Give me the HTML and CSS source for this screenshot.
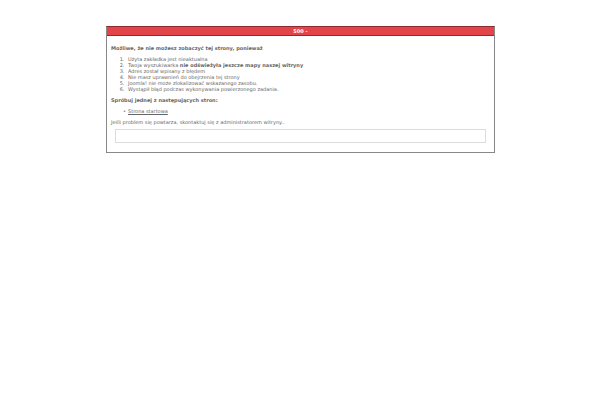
FILE: index.html
```html
<!DOCTYPE html>
<html lang="pl">
<head>
<meta charset="utf-8">
<title>500</title>
<link rel="stylesheet" href="styles.css">
</head>
<body>
<main class="error-box">
<h1 class="error-head">500 -</h1>
<div class="error-body">
<p><strong>Możliwe, że nie możesz zobaczyć tej strony, ponieważ</strong></p>
<ol>
<li>Użyta zakładka jest nieaktualna</li>
<li>Twoja wyszukiwarka <strong>nie odświeżyła jeszcze mapy naszej witryny</strong></li>
<li>Adres został wpisany z błędem</li>
<li>Nie masz uprawnień do obejrzenia tej strony</li>
<li>Joomla! nie może zlokalizować wskazanego zasobu.</li>
<li>Wystąpił błąd podczas wykonywania powierzonego zadania.</li>
</ol>
<p><strong>Spróbuj jednej z następujących stron:</strong></p>
<ul>
<li><a href="#">Strona startowa</a></li>
</ul>
<p>Jeśli problem się powtarza, skontaktuj się z administratorem witryny..</p>
<div class="tech-info"></div>
</div>
</main>
</body>
</html>
```
FILE: styles.css
```css
body {
  margin: 0;
  padding: 26px 105px 0 106px;
  background: #fff;
  color: #666;
  font: 5px/6px "DejaVu Sans", sans-serif;
}

.error-box {
  border: 1px solid #888;
  border-top-color: #8a2c30;
}

.error-head {
  margin: 0;
  padding: 1px 0;
  border-bottom: 1px solid #8a2c30;
  background: #e24449;
  color: #fff;
  font-size: 5px;
  line-height: 6px;
  text-align: center;
}

.error-body {
  padding: 9px 4px 5px;
}

p {
  margin: 0;
}

ol,
ul {
  margin: 5px 0;
  padding-left: 15px;
}

ul {
  list-style-type: "•";
}

li {
  padding-left: 2px;
}

a {
  color: #666;
}

.tech-info {
  margin: 4px;
  height: 12px;
  border: 1px solid #ddd;
}
```
